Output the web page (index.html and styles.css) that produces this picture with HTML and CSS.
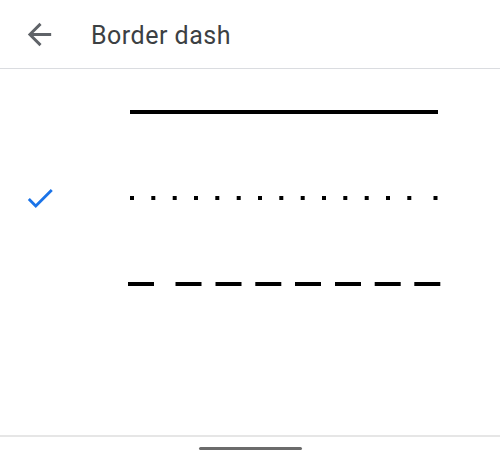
FILE: index.html
```html
<!DOCTYPE html>
<html>
<head>
<meta charset="utf-8">
<link rel="stylesheet" href="styles.css">
</head>
<body>
<div class="screen">
  <header class="appbar">
    <svg class="back" viewBox="0 0 24 24" width="35" height="35"><path d="M20 11H7.83l5.59-5.59L12 4l-8 8 8 8 1.41-1.41L7.83 13H20v-2z"/></svg>
    <div class="title">Border dash</div>
  </header>
  <main class="list">
    <div class="row">
      <div class="mark"></div>
      <svg class="line" width="320" height="8" viewBox="0 0 320 8"><rect x="2" y="2" width="308" height="4"/></svg>
    </div>
    <div class="row">
      <div class="mark"><svg class="check" viewBox="0 0 24 24" width="34" height="34"><path d="M9 16.17L4.83 12l-1.42 1.41L9 19 21 7l-1.41-1.41z"/></svg></div>
      <svg class="line" width="320" height="8" viewBox="0 0 320 8">
        <rect x="2" y="2" width="4" height="4"/>
        <rect x="23.3" y="2" width="4" height="4"/>
        <rect x="44.7" y="2" width="4" height="4"/>
        <rect x="66" y="2" width="4" height="4"/>
        <rect x="87.3" y="2" width="4" height="4"/>
        <rect x="108.7" y="2" width="4" height="4"/>
        <rect x="130" y="2" width="4" height="4"/>
        <rect x="151.3" y="2" width="4" height="4"/>
        <rect x="172.7" y="2" width="4" height="4"/>
        <rect x="194" y="2" width="4" height="4"/>
        <rect x="215.3" y="2" width="4" height="4"/>
        <rect x="236.7" y="2" width="4" height="4"/>
        <rect x="258" y="2" width="4" height="4"/>
        <rect x="279.3" y="2" width="4" height="4"/>
        <rect x="305.5" y="2" width="4" height="4"/>
      </svg>
    </div>
    <div class="row">
      <div class="mark"></div>
      <svg class="line" width="320" height="8" viewBox="0 0 320 8">
        <rect x="0" y="2" width="26" height="4"/>
        <rect x="47.5" y="2" width="26" height="4"/>
        <rect x="87.5" y="2" width="26" height="4"/>
        <rect x="127.3" y="2" width="26" height="4"/>
        <rect x="167" y="2" width="26" height="4"/>
        <rect x="207" y="2" width="26" height="4"/>
        <rect x="246.7" y="2" width="26" height="4"/>
        <rect x="286.3" y="2" width="26" height="4"/>
      </svg>
    </div>
  </main>
  <footer class="navbar"><div class="pill"></div></footer>
</div>
</body>
</html>
```
FILE: styles.css
```css
html, body {
  margin: 0;
  padding: 0;
  background: #ffffff;
}
.screen {
  width: 500px;
  height: 458px;
  display: flex;
  flex-direction: column;
  font-family: Roboto, "Noto Sans", sans-serif;
  overflow: hidden;
}
.appbar {
  height: 68px;
  border-bottom: 1px solid #dadce0;
  display: flex;
  align-items: center;
  padding-left: 22px;
  flex-shrink: 0;
}
.back {
  fill: #5f6368;
  display: block;
}
.title {
  margin-left: 34px;
  margin-top: 2px;
  font-size: 25px;
  letter-spacing: 0.5px;
  color: #3c4043;
}
.list {
  flex: 1;
  display: flex;
  flex-direction: column;
}
.row {
  height: 86px;
  display: flex;
  align-items: center;
}
.mark {
  width: 128px;
  display: flex;
  align-items: center;
}
.check {
  fill: #1a73e8;
  display: block;
  margin-left: 23px;
}
.line {
  display: block;
  fill: #000000;
}
.navbar {
  height: 21px;
  border-top: 2px solid #e6e6e6;
  flex-shrink: 0;
  display: flex;
  justify-content: center;
}
.pill {
  margin-top: 10px;
  width: 103px;
  height: 3px;
  border-radius: 2px;
  background: #6b6b6b;
}
```
